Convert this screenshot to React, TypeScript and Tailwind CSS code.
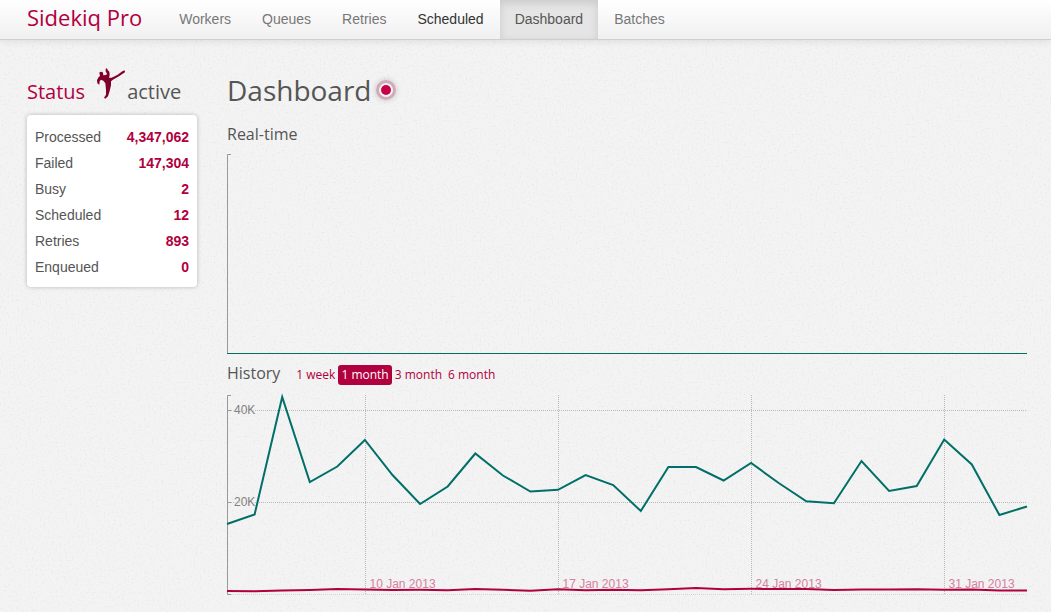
const navItems = [
  { label: 'Workers', tone: 'text-[#777]' },
  { label: 'Queues', tone: 'text-[#777]' },
  { label: 'Retries', tone: 'text-[#777]' },
  { label: 'Scheduled', tone: 'text-[#333]' },
  {
    label: 'Dashboard',
    tone: 'text-[#555] bg-[#e5e5e5] shadow-[inset_0_3px_8px_rgba(0,0,0,0.125)]',
    current: true,
  },
  { label: 'Batches', tone: 'text-[#777]' },
];

const stats = [
  ['Processed', '4,347,062'],
  ['Failed', '147,304'],
  ['Busy', '2'],
  ['Scheduled', '12'],
  ['Retries', '893'],
  ['Enqueued', '0'],
];

const ranges = ['1 week', '1 month', '3 month', '6 month'];

// Plot heights per day, measured from the top of the 200-unit chart.
const processed = [
  129, 119.5, 2, 87, 71.5, 45, 80, 109, 91.5, 58.5, 80.5, 96.5, 94.8, 80, 90, 116, 72, 72, 85.5, 68,
  88, 106.3, 108.2, 66, 96, 91, 44.5, 69.5, 120, 111.5,
];
const failed = [
  196, 196.3, 195.4, 195, 194, 194.6, 195, 194.8, 195.2, 194, 194.8, 195.8, 194.2, 195.3, 194.8, 195.2,
  194.3, 193.1, 194.2, 193.8, 194, 194, 195, 194.4, 194.4, 194.2, 194.8, 194.5, 195.5, 195.5,
];

const weeks = [
  { x: 138.5, label: '10 Jan 2013' },
  { x: 331.5, label: '17 Jan 2013' },
  { x: 524.5, label: '24 Jan 2013' },
  { x: 717.5, label: '31 Jan 2013' },
];

const toPoints = (ys: number[]) =>
  ys.map((y, i) => `${((i * 800) / (ys.length - 1)).toFixed(1)},${y}`).join(' ');

function PaperTexture() {
  return (
    <svg className="absolute inset-0 -z-10 h-full w-full" aria-hidden="true">
      <filter id="grain">
        <feTurbulence type="fractalNoise" baseFrequency="0.5" numOctaves="2" seed="4" />
        <feColorMatrix values="0 0 0 0 0.55  0 0 0 0 0.55  0 0 0 0 0.55  0 0 0 1.8 -0.95" />
      </filter>
      <rect width="100%" height="100%" filter="url(#grain)" opacity="0.35" />
    </svg>
  );
}

function Kicker() {
  return (
    <svg viewBox="0 0 84 93" className="h-[31px] w-7" fill="#80002b" aria-hidden="true">
      <path d="M7 14 C9 10 16 10 18 14 L19 22 L27 21 L30 18 L26 10 L26 2 L30 1 L32 6 L37 11 L38 21 L36 29 L44 29 L62 20 L76 10 L83 7 L84 13 L77 17 L66 25 L50 34 L42 40 L42 52 L38 69 L33 85 L25 92 L21 89 L27 80 L27 65 L25 46 L19 38 L12 35 L8 40 L7 50 L1 46 L0 36 L5 27 L9 24 Z" />
    </svg>
  );
}

function RealtimeChart() {
  return (
    <svg viewBox="0 0 800 200" className="block h-auto w-full" role="img" aria-label="Real-time jobs">
      <path d="M4 0.5H0.5V199" fill="none" stroke="#999" />
      <path d="M0 199.5H800" stroke="#006f68" />
    </svg>
  );
}

function HistoryChart() {
  return (
    <svg
      viewBox="0 0 800 200"
      className="block h-auto w-full overflow-visible font-['Liberation_Sans',Arial,sans-serif] text-[12px]"
      role="img"
      aria-label="Job history"
    >
      <g stroke="#b8b8b8" strokeDasharray="1 1">
        <path d="M4 15.5H800M4 107.5H800" />
        <path d="M4 199.5H800" stroke="#d4d4d4" />
        {weeks.map((w) => (
          <path key={w.label} d={`M${w.x} 0V200`} />
        ))}
      </g>
      <path d="M4 0.5H0.5V199.5H4M0 15.5H4M0 107.5H4" fill="none" stroke="#999" />
      <g fill="#808080" stroke="#f2f2f2" strokeWidth="2" paintOrder="stroke">
        <text x="7" y="19">40K</text>
        <text x="7" y="111">20K</text>
      </g>
      <polyline points={toPoints(processed)} fill="none" stroke="#006f68" strokeWidth="2" />
      <polyline points={toPoints(failed)} fill="none" stroke="#b1003e" strokeWidth="2" />
      <g fill="#d5809f">
        {weeks.map((w) => (
          <text key={w.label} x={w.x + 4} y="193">
            {w.label}
          </text>
        ))}
      </g>
    </svg>
  );
}

export default function App() {
  return (
    <div className="relative isolate min-h-screen bg-[#f3f3f3] font-['Liberation_Sans',Arial,sans-serif] text-sm text-[#555]">
      <PaperTexture />
      <header className="flex h-10 items-stretch border-b border-[#cfcfcf] bg-linear-to-b from-white to-[#f0f0f0] pl-[27px] shadow-[0_1px_8px_rgba(0,0,0,0.1)]">
        <a
          href="#"
          className="mr-[22px] flex items-center pb-1 font-['Open_Sans',sans-serif] text-[22px] whitespace-nowrap text-[#b1003e]"
        >
          Sidekiq Pro
        </a>
        <nav className="flex gap-px">
          {navItems.map((item) => (
            <a
              key={item.label}
              href="#"
              aria-current={item.current ? 'page' : undefined}
              className={`flex items-center px-[15px] pb-0.5 ${item.tone}`}
            >
              {item.label}
            </a>
          ))}
        </nav>
      </header>

      <div className="flex gap-[30px] pr-6 pl-[27px]">
        <aside className="w-[170px] shrink-0 pt-7">
          <h2 className="flex h-[47px] items-start font-['Open_Sans',sans-serif] text-xl leading-[48px]">
            <span className="text-[#b1003e]">Status</span>
            <span className="mr-0.5 ml-3">
              <Kicker />
            </span>
            <span>active</span>
          </h2>
          <div className="rounded bg-white px-2 pt-[9px] pb-[7px] shadow-[0_0_4px_rgba(0,0,0,0.25)]">
            <table className="w-full">
              <tbody>
                {stats.map(([name, value]) => (
                  <tr key={name} className="h-[26px]">
                    <th scope="row" className="p-0 text-left font-normal">
                      {name}
                    </th>
                    <td className="p-0 text-right font-bold text-[#b1003e]">{value}</td>
                  </tr>
                ))}
              </tbody>
            </table>
          </div>
        </aside>

        <main className="min-w-0 flex-1 pt-[30px] font-['Open_Sans',sans-serif]">
          <div className="flex h-10 items-center gap-1">
            <h1 className="text-[28px] leading-10">Dashboard</h1>
            <span className="flex size-5 items-center justify-center rounded-full border-3 border-[#cfaab7] shadow-[0_0_6px_rgba(0,0,0,0.2)]">
              <span className="size-[10px] rounded-full bg-[#c7004c]" />
            </span>
          </div>
          <h2 className="mt-3 mb-2 text-base leading-6">Real-time</h2>
          <RealtimeChart />
          <div className="flex h-[41px] items-center">
            <h2 className="mr-[13px] pb-[3px] text-base leading-6">History</h2>
            <div className="flex text-[12px] leading-5 text-[#b1003e]">
              {ranges.map((range) => (
                <a
                  key={range}
                  href="#"
                  className={range === '1 month' ? 'rounded-[3px] bg-[#b1003e] px-[3px] text-white' : 'px-[3px]'}
                >
                  {range}
                </a>
              ))}
            </div>
          </div>
          <HistoryChart />
        </main>
      </div>
    </div>
  );
}
